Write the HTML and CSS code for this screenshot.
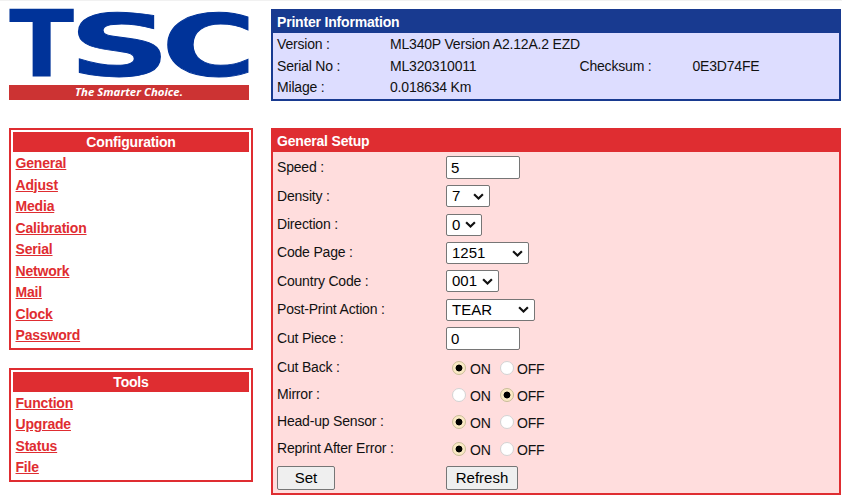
FILE: index.html
```
<!DOCTYPE html>
<html lang="en">
<head>
<meta charset="utf-8">
<title>Printer Setup</title>
<link rel="stylesheet" href="styles.css">
</head>
<body>
<div class="page">
  <aside class="side">
    <div class="logo">
      <svg class="brand" width="240" height="68" viewBox="0 0 240 68" aria-label="TSC">
        <g transform="translate(0 67)">
          <text transform="scale(1.04 1)" x="0" y="0">T</text>
          <text transform="translate(61 0) scale(1.54 .93)" x="-1" y="-1">S</text>
          <text transform="translate(154 0) scale(1.4 .93)" x="-1" y="-1">C</text>
        </g>
      </svg>
      <div class="slogan">The Smarter Choice.</div>
    </div>
    <nav class="menu config">
      <h2>Configuration</h2>
      <a href="#">General</a><a href="#">Adjust</a><a href="#">Media</a><a href="#">Calibration</a><a href="#">Serial</a><a href="#">Network</a><a href="#">Mail</a><a href="#">Clock</a><a href="#">Password</a>
    </nav>
    <nav class="menu">
      <h2>Tools</h2>
      <a href="#">Function</a><a href="#">Upgrade</a><a href="#">Status</a><a href="#">File</a>
    </nav>
  </aside>
  <main class="main">
    <section class="panel info">
      <h2>Printer Information</h2>
      <div class="info-row"><span>Version :</span><span class="wide">ML340P Version A2.12A.2 EZD</span></div>
      <div class="info-row"><span>Serial No :</span><span>ML320310011</span><span>Checksum :</span><span>0E3D74FE</span></div>
      <div class="info-row"><span>Milage :</span><span>0.018634 Km</span></div>
    </section>
    <form class="panel setup">
      <h2>General Setup</h2>
      <div class="row text-row"><label>Speed :</label><input class="field" type="text" value="5"></div>
      <div class="row"><label>Density :</label><div class="select w44">7<svg class="chev" viewBox="0 0 10 6"><path d="M1 1l4 3.8L9 1"/></svg></div></div>
      <div class="row"><label>Direction :</label><div class="select w36">0<svg class="chev" viewBox="0 0 10 6"><path d="M1 1l4 3.8L9 1"/></svg></div></div>
      <div class="row"><label>Code Page :</label><div class="select w83">1251<svg class="chev" viewBox="0 0 10 6"><path d="M1 1l4 3.8L9 1"/></svg></div></div>
      <div class="row"><label>Country Code :</label><div class="select w53">001<svg class="chev" viewBox="0 0 10 6"><path d="M1 1l4 3.8L9 1"/></svg></div></div>
      <div class="row"><label>Post-Print Action :</label><div class="select w89">TEAR<svg class="chev" viewBox="0 0 10 6"><path d="M1 1l4 3.8L9 1"/></svg></div></div>
      <div class="row text-row"><label>Cut Piece :</label><input class="field" type="text" value="0"></div>
      <div class="row radio-row"><label>Cut Back :</label><div class="radios"><i class="dot on"></i><span>ON</span><i class="dot"></i><span>OFF</span></div></div>
      <div class="row radio-row"><label>Mirror :</label><div class="radios"><i class="dot"></i><span>ON</span><i class="dot on"></i><span>OFF</span></div></div>
      <div class="row radio-row"><label>Head-up Sensor :</label><div class="radios"><i class="dot on"></i><span>ON</span><i class="dot"></i><span>OFF</span></div></div>
      <div class="row radio-row"><label>Reprint After Error :</label><div class="radios"><i class="dot on"></i><span>ON</span><i class="dot"></i><span>OFF</span></div></div>
      <div class="row button-row"><button class="set" type="button">Set</button><button class="refresh" type="button">Refresh</button></div>
    </form>
  </main>
</div>
</body>
</html>
```
FILE: styles.css
```
* { box-sizing: border-box; }
body {
  margin: 0;
  height: 496px;
  overflow: hidden;
  background: #fff;
  border-top: 1px solid #f1f1f1;
  font: 14px/21.5px "Liberation Sans", Arial, sans-serif;
  letter-spacing: -0.19px;
  color: #111;
}
.page { display: flex; gap: 18px; padding: 8px 0 0 9px; }
.side { width: 244px; }
.main { width: 570px; }
h2 { margin: 0; font-size: 14px; font-weight: bold; color: #fff; }

.logo { width: 240px; height: 119px; padding-top: 1px; }
.brand { display: block; overflow: visible; }
.brand text { font: bold 92px "DejaVu Sans", sans-serif; letter-spacing: 0; fill: #003399; }
.brand text + text { stroke: #003399; stroke-width: 1px; }
.slogan {
  height: 15px;
  margin-top: 7px;
  background: #cc3333;
  color: #fff;
  text-align: center;
  letter-spacing: 0;
  font: italic bold 11.4px/14px "Open Sans", sans-serif;
}

.menu {
  display: flex;
  flex-direction: column;
  align-items: flex-start;
  border: 2px solid #df2d31;
  padding: 2px;
  margin-bottom: 18px;
}
.menu h2 { width: 100%; height: 20px; line-height: 21px; text-align: center; background: #df2d31; }
.menu a { height: 21.5px; line-height: 23px; padding-left: 2.5px; color: #df2d31; font-weight: bold; }

.panel { border: 2px solid; }
.panel h2 { height: 22px; line-height: 23px; padding-left: 4px; }
.info { height: 92px; margin-bottom: 27px; border-color: #183a90; background: #ddddff; }
.info h2 { background: #183a90; }
.info-row { display: grid; grid-template-columns: 113px 189.5px 113px 1fr; padding-left: 4px; height: 21.5px; line-height: 22.5px; }
.info-row .wide { grid-column: span 3; }

.setup { height: 367px; border-color: #df2d31; background: #ffdddd; }
.setup h2 { background: #df2d31; margin-bottom: 1px; }
.row { display: grid; grid-template-columns: 169px 1fr; align-items: center; height: 28.3px; padding-left: 4px; }
.text-row { height: 29.3px; }
.field, .select {
  border: 1px solid #767676;
  border-radius: 2px;
  background: #fff;
  color: #000;
  letter-spacing: 0;
  font: 15px/20px "Liberation Sans", Arial, sans-serif;
}
.field { width: 74px; height: 23px; padding: 1px 4px; }
.select { display: flex; justify-content: space-between; align-items: center; height: 22px; padding: 0 5px; }
.w44 { width: 44px; }
.w36 { width: 36px; }
.w83 { width: 83px; }
.w53 { width: 53px; }
.w89 { width: 89px; }
.chev { width: 11px; height: 7px; fill: none; stroke: #111; stroke-width: 2; }

.radio-row { height: 27px; }
.radio-row label { padding-top: 2px; }
.radios { display: grid; grid-template-columns: 18px 30px 17px 1fr; align-items: center; padding: 2px 0 0 6px; }
.radios span { padding-top: 4px; }
.dot { width: 14px; height: 14px; border: 1px solid #d3d3d3; border-radius: 50%; background: #fff; }
.dot.on { border-color: #c8bd98; background: radial-gradient(circle, #000 3px, #fae9c4 3.8px); }

.button-row { height: 31.5px; padding-top: 2px; }
button {
  height: 24px;
  padding: 0;
  border: 1px solid #767676;
  border-radius: 2px;
  background: #efefef;
  color: #000;
  font: 15px/20px "Liberation Sans", Arial, sans-serif;
}
.set { width: 58px; }
.refresh { width: 72px; }
```
